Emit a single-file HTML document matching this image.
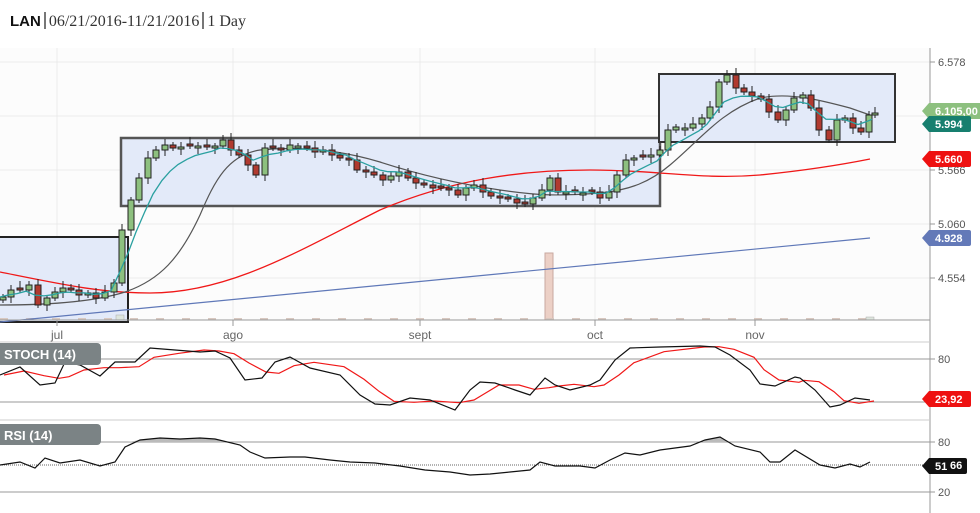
<!DOCTYPE html>
<html><head><meta charset="utf-8"><style>
body{margin:0;width:980px;height:513px;overflow:hidden;background:#fff;font-family:"Liberation Sans",sans-serif}
#hdr{position:absolute;left:10px;top:12px;font-size:16px;color:#333;font-family:"Liberation Serif",serif}
#hdr b{font-family:"Liberation Sans",sans-serif;font-size:15px;color:#111}
.bar{display:inline-block;width:2px;height:17px;background:#777;vertical-align:-3px;margin:0 3px}
svg{position:absolute;left:0;top:0}
</style></head><body>
<div id="hdr"><b>LAN</b><span class="bar"></span>06/21/2016-11/21/2016<span class="bar"></span>1 Day</div>
<svg id="s" width="980" height="513" font-family="Liberation Sans, sans-serif"></svg>
<script>
var s=document.getElementById('s'),h='';
function L(x1,y1,x2,y2,c,w,d){h+='<line x1="'+x1+'" y1="'+y1+'" x2="'+x2+'" y2="'+y2+'" stroke="'+c+'" stroke-width="'+(w||1)+'"'+(d?' stroke-dasharray="'+d+'"':'')+'/>';}
function T(x,y,t,c,sz,b,a){h+='<text x="'+x+'" y="'+y+'" fill="'+c+'" font-size="'+(sz||11)+'"'+(b?' font-weight="bold"':'')+(a?' text-anchor="'+a+'"':'')+'>'+t+'</text>';}
function P(pts,c,w){h+='<polyline fill="none" stroke="'+c+'" stroke-width="'+(w||1)+'" points="'+pts.map(function(p){return p[0]+','+p[1]}).join(' ')+'"/>';}
h+='<rect x="0" y="48" width="930" height="272" fill="#fcfcfc"/>';
[62,116,170,224,278].forEach(function(y){L(0,y,930,y,'#ebebeb')});
[57,233,420,595,755].forEach(function(x){L(x,48,x,320,'#ebebeb')});
h+='<rect x="-2" y="237" width="130" height="85" fill="#e3eaf9" stroke="#222" stroke-width="2"/>';
h+='<rect x="121" y="138" width="539" height="68" fill="#e3eaf9" stroke="#555" stroke-width="2.5"/>';
h+='<rect x="659" y="74" width="236" height="68" fill="#e3eaf9" stroke="#333" stroke-width="2"/>';
h+='<rect x="545" y="253" width="8" height="67" fill="#ecd0c6" stroke="#c9a9a0"/>';
for(var x=0;x<870;x+=26){h+='<rect x="'+x+'" y="318" width="8" height="2" fill="#d8c8c0"/>';}
h+='<rect x="116" y="315" width="8" height="5" fill="#dde5dd" stroke="#aaa" stroke-width=".5"/><rect x="866" y="317" width="8" height="3" fill="#dde5dd" stroke="#aaa" stroke-width=".5"/>';
L(0,322,870,238,'#5f78b8',1.2);
h+='<path d="M0,272 C60,284 100,293 150,293 C230,293 300,250 380,210 C450,180 520,170 590,170 C660,170 700,180 760,175 C810,170 840,165 870,159" fill="none" stroke="#f01818" stroke-width="1.3"/>';
h+='<path d="M0,305 C60,305 100,300 125,292 C160,280 180,258 200,215 C215,180 228,155 260,150 C300,146 340,150 380,162 C420,175 460,184 500,190 C540,196 560,196 600,193 C630,190 650,182 670,165 C700,140 720,112 760,98 C790,92 820,100 850,108 L870,115" fill="none" stroke="#555" stroke-width="1.2"/>';
var d=[[0,297],[8,290],[17,290],[26,285],[35,305],[44,298],[52,292],[60,288],[68,290],[76,295],[85,293],[93,298],[102,292],[111,283],[119,230],[128,200],[136,178],[145,158],[153,150],[162,145],[170,148],[178,147],[187,146],[195,146],[204,147],[212,146],[220,140],[228,150],[236,155],[245,165],[253,175],[262,148],[270,148],[278,150],[287,145],[295,146],[304,148],[312,152],[320,150],[329,155],[337,158],[346,160],[354,170],[363,172],[371,175],[380,180],[388,176],[396,172],[405,178],[413,183],[421,185],[430,188],[438,188],[446,190],[455,195],[463,188],[471,185],[480,192],[488,196],[497,198],[505,199],[514,203],[522,204],[530,198],[539,190],[547,178],[555,192],[563,192],[572,192],[580,193],[589,192],[597,198],[606,192],[614,175],[623,160],[631,158],[640,157],[648,155],[657,150],[665,130],[673,127],[682,128],[690,124],[699,118],[707,107],[716,82],[724,75],[733,88],[741,92],[749,96],[758,99],[766,112],[775,120],[783,110],[791,98],[800,95],[808,108],[816,130],[826,140],[834,120],[842,118],[850,128],[858,132],[866,115],[872,113]];
var e1=[],a=d[0][1];
d.forEach(function(p){a+=0.28*(p[1]-a);e1.push([p[0],a.toFixed(1)]);});
var prev=d[0][1]+3;
d.forEach(function(p,i){var o=prev,c=p[1];if(Math.abs(o-c)<2)o=c+2*((i%2)?1:-1);var t=Math.min(o,c),bt=Math.max(o,c);var hi=t-3-(i*7%5),lo=bt+3+(i*3%6);
L(p[0]+3,hi,p[0]+3,lo,'#222');h+='<rect x="'+p[0]+'" y="'+t+'" width="6" height="'+(bt-t)+'" fill="'+(c<o?'#8dc07f':'#b13a30')+'" stroke="#222" stroke-width="1"/>';prev=c;});
P(e1,'#2aa0a0',1.3);
L(930,48,930,513,'#999');L(0,320,930,320,'#999');
[[57,'jul'],[233,'ago'],[420,'sept'],[595,'oct'],[755,'nov']].forEach(function(q){L(q[0],320,q[0],326,'#999');T(q[0],339,q[1],'#666',12,0,'middle')});
[[62,'6.578'],[170,'5.566'],[224,'5.060'],[278,'4.554']].forEach(function(q){L(930,q[0],935,q[0],'#999');T(938,q[0]+4,q[1],'#555',11)});
function tag(y,t,c,w){h+='<path d="M922,'+y+' l7,-8 h'+(w||46)+' q2,0 2,2 v12 q0,2 -2,2 h-'+(w||46)+' z" fill="'+c+'"/>';T(935,y+4,t,'#fff',11,1);}
L(0,342,930,342,'#ccc');[359,402].forEach(function(y){L(0,y,930,y,'#999')});L(0,420,930,420,'#ccc');
var sb=[[0,375],[20,367],[40,385],[55,383],[65,362],[80,365],[100,376],[115,362],[135,362],[150,348],[175,350],[200,352],[215,351],[230,358],[245,380],[262,378],[275,362],[290,357],[310,368],[340,375],[360,395],[375,404],[390,405],[410,398],[430,400],[455,410],[470,390],[480,382],[495,383],[515,390],[530,395],[545,378],[555,385],[570,390],[590,385],[600,380],[615,360],[630,348],[660,347],[700,346],[715,347],[730,355],[750,370],[760,384],[775,386],[795,377],[800,378],[815,390],[830,407],[840,405],[855,398],[870,400]];
var sr=sb.map(function(p,i){var v=0,n=0;for(var k=Math.max(0,i-2);k<=i;k++){v+=sb[k][1];n++;}return[p[0]+4,(v/n).toFixed(1)];});
P(sr,'#f01818',1.2);P(sb,'#111',1.2);
h+='<rect x="-6" y="343" width="107" height="22" rx="4" fill="#7b8385"/>';T(4,359,'STOCH (14)','#fff',13,1);
L(930,359,935,359,'#999');T(938,363,'80','#555',11);
[442,492].forEach(function(y){L(0,y,930,y,'#999')});L(0,465,930,465,'#666',1,'1,1');
var rs=[[0,465],[20,462],[35,468],[45,458],[60,463],[80,460],[100,466],[115,462],[125,447],[140,440],[160,438],[180,439],[200,438],[215,439],[240,445],[250,452],[265,458],[290,457],[305,457],[330,460],[350,462],[375,463],[400,466],[425,470],[450,472],[470,475],[490,474],[510,472],[530,470],[540,462],[555,466],[580,466],[595,468],[610,460],[625,453],[640,455],[660,450],[690,446],[705,440],[720,437],[735,446],[760,452],[770,462],[780,462],[795,450],[820,465],[835,468],[850,464],[860,467],[870,462]];
h+='<path d="M128,442 L140,440 L160,438 L180,439 L200,438 L215,439 L225,442 Z M703,442 L705,440 L720,437 L729,442 Z" fill="#bbb"/>';
P(rs,'#111',1.2);
h+='<rect x="-6" y="424" width="107" height="21" rx="4" fill="#7b8385"/>';T(4,440,'RSI (14)','#fff',13,1);
L(930,442,935,442,'#999');T(938,446,'80','#555',11);L(930,492,935,492,'#999');T(938,496,'20','#555',11);
tag(111,'6.105,00','#8dc07f',52);tag(124,'5.994','#177f6f',40);tag(159,'5.660','#ee1111',40);tag(238,'4.928','#6379b8',40);tag(399,'23,92','#ee1111',40);
h+='<path d="M922,466 l7,-8 h36 q2,0 2,2 v12 q0,2 -2,2 h-36 z" fill="#111"/>';T(935,470,'51','#fff',11,1);T(950,469,'66','#fff',11,1);
s.innerHTML=h;
</script>
</body></html>
